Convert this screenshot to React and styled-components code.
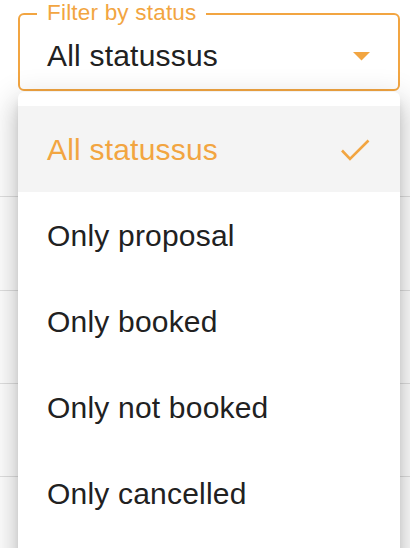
import React from "react";
import styled, { createGlobalStyle } from "styled-components";

const ORANGE = "#f2a541";

const GlobalStyle = createGlobalStyle`
  html, body {
    margin: 0;
    padding: 0;
    background: #ffffff;
  }
  body {
    font-family: "Liberation Sans", Arial, Helvetica, sans-serif;
    color: #212121;
  }
  * { box-sizing: border-box; }
`;

const Page = styled.div`
  position: relative;
  width: 410px;
  height: 548px;
  overflow: hidden;
  background: #fff;
`;

const Field = styled.div`
  position: relative;
  margin: 13px 10px 0 18px;
  height: 78px;
  border: 2px solid ${ORANGE};
  border-radius: 6px;
  display: flex;
  align-items: center;
  justify-content: space-between;
  padding: 8px 28px 0 27px;
`;

const FieldLabel = styled.span`
  position: absolute;
  top: -15px;
  left: 17px;
  padding: 0 9px 0 10px;
  background: #fff;
  color: ${ORANGE};
  font-size: 22.5px;
  line-height: 26px;
  letter-spacing: 0.2px;
`;

const Value = styled.span`
  font-size: 30px;
  line-height: 30px;
  letter-spacing: 0.2px;
  color: #212121;
`;

const BgList = styled.div`
  margin-top: 13px;
  display: flex;
  flex-direction: column;
`;

const BgRow = styled.div`
  height: 93.3px;
  border-bottom: 1px solid rgba(0, 0, 0, 0.12);
`;

const Menu = styled.ul`
  position: absolute;
  top: 92px;
  left: 18px;
  width: 382px;
  height: 480px;
  margin: 0;
  padding: 14px 0 0;
  list-style: none;
  background: #fff;
  border-radius: 6px;
  box-shadow: 0 10px 30px 6px rgba(0, 0, 0, 0.14),
    0 16px 20px 2px rgba(0, 0, 0, 0.1), 0 6px 10px -4px rgba(0, 0, 0, 0.2);
`;

const Item = styled.li`
  height: 86px;
  display: flex;
  align-items: center;
  justify-content: space-between;
  padding: 2px 30px 0 29px;
  font-size: 30px;
  line-height: 30px;
  letter-spacing: 0.2px;
  color: ${(p) => (p.$selected ? ORANGE : "#212121")};
  background: ${(p) => (p.$selected ? "#f4f4f4" : "transparent")};
`;

const Arrow = () => (
  <svg width="17" height="9" viewBox="0 0 17 9">
    <polygon points="0,0 17,0 8.5,8.5" fill={ORANGE} />
  </svg>
);

const Check = () => (
  <svg width="30" height="24" viewBox="0 0 30 24">
    <polyline
      points="2,12.5 10,21 28.5,2.5"
      fill="none"
      stroke={ORANGE}
      strokeWidth="2.6"
    />
  </svg>
);

const options = [
  "All statussus",
  "Only proposal",
  "Only booked",
  "Only not booked",
  "Only cancelled",
];

export default function App() {
  return (
    <Page>
      <GlobalStyle />
      <Field>
        <FieldLabel>Filter by status</FieldLabel>
        <Value>All statussus</Value>
        <Arrow />
      </Field>
      <BgList>
        <BgRow />
        <BgRow />
        <BgRow />
        <BgRow />
        <BgRow />
      </BgList>
      <Menu>
        {options.map((o, i) => (
          <Item key={o} $selected={i === 0}>
            <span>{o}</span>
            {i === 0 && <Check />}
          </Item>
        ))}
      </Menu>
    </Page>
  );
}
